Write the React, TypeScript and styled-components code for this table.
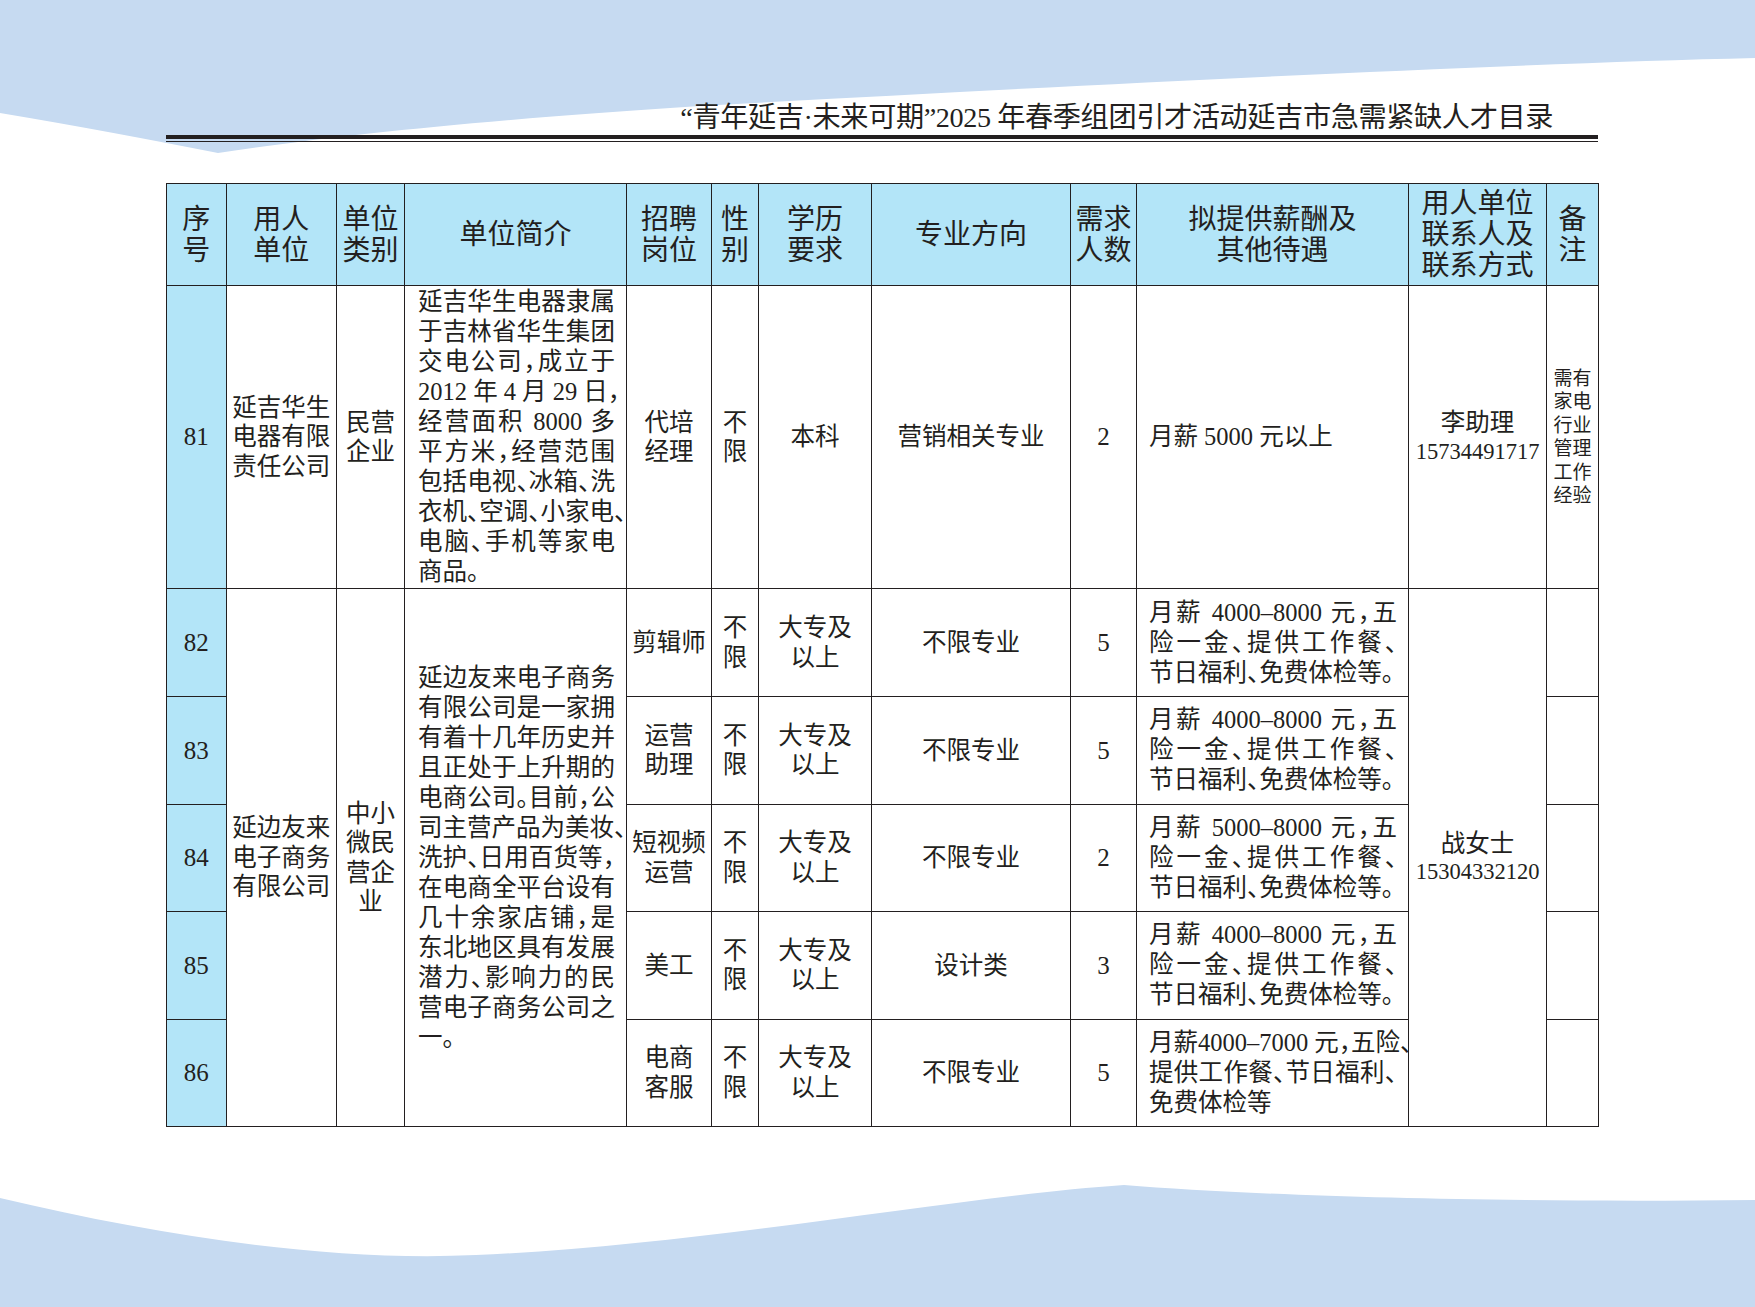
import styled, { createGlobalStyle, css } from 'styled-components';

const INK = '#231f20';
const CYAN = '#b3e5f8';
const WAVE = '#c6daf1';

const cols = [59.5, 110.5, 68, 222, 85, 47, 113, 199, 66, 272, 138, 52];

const heads = [
  ['序', '号'],
  ['用人', '单位'],
  ['单位', '类别'],
  ['单位简介'],
  ['招聘', '岗位'],
  ['性', '别'],
  ['学历', '要求'],
  ['专业方向'],
  ['需求', '人数'],
  ['拟提供薪酬及', '其他待遇'],
  ['用人单位', '联系人及', '联系方式'],
  ['备', '注'],
];

const introHuasheng = [
  '延吉华生电器隶属',
  '于吉林省华生集团',
  '交电公司，成立于',
  '2012 年 4 月 29 日，',
  '经营面积 8000 多',
  '平方米，经营范围',
  '包括电视、冰箱、洗',
  '衣机、空调、小家电、',
  '电脑、手机等家电',
  '商品。',
];

const introYoulai = [
  '延边友来电子商务',
  '有限公司是一家拥',
  '有着十几年历史并',
  '且正处于上升期的',
  '电商公司。目前，公',
  '司主营产品为美妆、',
  '洗护、日用百货等，',
  '在电商全平台设有',
  '几十余家店铺，是',
  '东北地区具有发展',
  '潜力、影响力的民',
  '营电子商务公司之',
  '一。',
];

const jobs = [
  {
    no: 82,
    post: ['剪辑师'],
    major: '不限专业',
    count: 5,
    pay: ['月薪 4000–8000 元，五', '险一金、提供工作餐、', '节日福利、免费体检等。'],
  },
  {
    no: 83,
    post: ['运营', '助理'],
    major: '不限专业',
    count: 5,
    pay: ['月薪 4000–8000 元，五', '险一金、提供工作餐、', '节日福利、免费体检等。'],
  },
  {
    no: 84,
    post: ['短视频', '运营'],
    major: '不限专业',
    count: 2,
    pay: ['月薪 5000–8000 元，五', '险一金、提供工作餐、', '节日福利、免费体检等。'],
  },
  {
    no: 85,
    post: ['美工'],
    major: '设计类',
    count: 3,
    pay: ['月薪 4000–8000 元，五', '险一金、提供工作餐、', '节日福利、免费体检等。'],
  },
  {
    no: 86,
    post: ['电商', '客服'],
    major: '不限专业',
    count: 5,
    pay: ['月薪4000–7000 元，五险、', '提供工作餐、节日福利、', '免费体检等'],
  },
];

const Lines = ({ lines, justify }: { lines: string[]; justify?: boolean }) => (
  <>
    {lines.map((line, i) => (
      <Line key={i} $justify={!!justify && i < lines.length - 1}>
        {line}
      </Line>
    ))}
  </>
);

const Waves = () => (
  <Backdrop viewBox="0 0 1755 1307" preserveAspectRatio="none">
    <path
      d="M0,0 L1755,0 L1755,58 C1500,64 1100,84 700,106 C480,120 330,136 218,153 C150,140 80,126 0,113 Z"
      fill={WAVE}
    />
    <path
      d="M0,1198 C160,1236 330,1262 476,1255 C700,1246 960,1196 1124,1185 C1260,1196 1500,1203 1755,1200 L1755,1307 L0,1307 Z"
      fill={WAVE}
    />
  </Backdrop>
);

const App = () => {
  return (
    <Page>
      <GlobalStyle />
      <Waves />
      <Sheet>
        <Title>“青年延吉·未来可期”2025 年春季组团引才活动延吉市急需紧缺人才目录</Title>
        <TitleRule />

        <Grid>
          <colgroup>
            {cols.map((w, i) => (
              <col key={i} style={{ width: w }} />
            ))}
          </colgroup>
          <thead>
            <Row $h={102}>
              {heads.map((h, i) => (
                <HeadCell key={i}>
                  <Lines lines={h} />
                </HeadCell>
              ))}
            </Row>
          </thead>
          <tbody>
            <Row $h={303}>
              <Cell $cyan>
                <Num>81</Num>
              </Cell>
              <Cell>
                <Lines lines={['延吉华生', '电器有限', '责任公司']} />
              </Cell>
              <Cell>
                <Lines lines={['民营', '企业']} />
              </Cell>
              <Cell $intro>
                <Lines lines={introHuasheng} justify />
              </Cell>
              <Cell>
                <Lines lines={['代培', '经理']} />
              </Cell>
              <Cell>
                <Lines lines={['不', '限']} />
              </Cell>
              <Cell>本科</Cell>
              <Cell>营销相关专业</Cell>
              <Cell>
                <Num>2</Num>
              </Cell>
              <Cell $pay>月薪 5000 元以上</Cell>
              <Cell>
                <Line>李助理</Line>
                <Phone>15734491717</Phone>
              </Cell>
              <Cell>
                <Note>
                  <Lines lines={['需有', '家电', '行业', '管理', '工作', '经验']} />
                </Note>
              </Cell>
            </Row>

            {jobs.map((job, i) => (
              <Row key={job.no} $h={i === 0 ? 108 : 107.5}>
                <Cell $cyan>
                  <Num>{job.no}</Num>
                </Cell>
                {i === 0 && (
                  <>
                    <Cell rowSpan={5}>
                      <Lines lines={['延边友来', '电子商务', '有限公司']} />
                    </Cell>
                    <Cell rowSpan={5}>
                      <Lines lines={['中小', '微民', '营企', '业']} />
                    </Cell>
                    <Cell rowSpan={5} $intro>
                      <Lines lines={introYoulai} justify />
                    </Cell>
                  </>
                )}
                <Cell>
                  <Lines lines={job.post} />
                </Cell>
                <Cell>
                  <Lines lines={['不', '限']} />
                </Cell>
                <Cell>
                  <Lines lines={['大专及', '以上']} />
                </Cell>
                <Cell>{job.major}</Cell>
                <Cell>
                  <Num>{job.count}</Num>
                </Cell>
                <Cell $pay>
                  <Lines lines={job.pay} justify />
                </Cell>
                {i === 0 && (
                  <Cell rowSpan={5}>
                    <Line>战女士</Line>
                    <Phone>15304332120</Phone>
                  </Cell>
                )}
                <Cell />
              </Row>
            ))}
          </tbody>
        </Grid>
      </Sheet>
    </Page>
  );
};

export default App;

const GlobalStyle = createGlobalStyle`
  html, body {
    margin: 0;
    padding: 0;
    background: #ffffff;
  }
  body {
    font-family: "Liberation Serif", "Noto Sans CJK SC", serif;
    color: ${INK};
    font-feature-settings: "halt";
  }
`;

const Page = styled.div`
  position: relative;
  min-height: 1307px;
  overflow: hidden;
  background: #ffffff;
`;

const Backdrop = styled.svg`
  position: absolute;
  top: 0;
  left: 0;
  width: 1755px;
  height: 1307px;
  z-index: 0;
`;

const Sheet = styled.div`
  position: relative;
  z-index: 1;
  width: 1432px;
  margin-left: 166px;
  padding-top: 102px;
`;

const Title = styled.h1`
  margin: 0;
  padding-right: 45px;
  font-size: 28.2px;
  font-weight: 400;
  line-height: 32px;
  text-align: right;
  letter-spacing: -0.4px;
  white-space: nowrap;
`;

const TitleRule = styled.div`
  height: 2px;
  margin-top: 1px;
  border-top: 4px solid ${INK};
  border-bottom: 1px solid ${INK};
`;

const Grid = styled.table`
  margin-top: 41px;
  width: 1432px;
  table-layout: fixed;
  border-collapse: collapse;
  border: 1.5px solid ${INK};
`;

const Row = styled.tr<{ $h: number }>`
  height: ${(p) => p.$h}px;
`;

const HeadCell = styled.th`
  padding: 0;
  border: 1.5px solid ${INK};
  background: ${CYAN};
  font-size: 28px;
  font-weight: 400;
  line-height: 31px;
  text-align: center;
  vertical-align: middle;
`;

const Cell = styled.td<{ $cyan?: boolean; $intro?: boolean; $pay?: boolean }>`
  padding: 0;
  border: 1.5px solid ${INK};
  background: ${(p) => (p.$cyan ? CYAN : '#ffffff')};
  font-size: 24.5px;
  line-height: 29.5px;
  text-align: center;
  vertical-align: middle;
  white-space: nowrap;

  ${(p) =>
    p.$intro &&
    css`
      padding: 0 11px 0 13px;
      line-height: 30px;
      text-align: left;
    `}

  ${(p) =>
    p.$pay &&
    css`
      padding: 0 11px 0 12px;
      line-height: 30px;
      text-align: left;
    `}
`;

const Line = styled.span<{ $justify?: boolean }>`
  display: block;
  white-space: nowrap;

  ${(p) =>
    p.$justify &&
    css`
      text-align: justify;
      text-align-last: justify;
    `}
`;

const Num = styled.span`
  font-size: 25px;
`;

const Phone = styled.span`
  display: block;
  font-size: 22.5px;
  line-height: 28px;
`;

const Note = styled.div`
  font-size: 19px;
  line-height: 23.5px;
`;
